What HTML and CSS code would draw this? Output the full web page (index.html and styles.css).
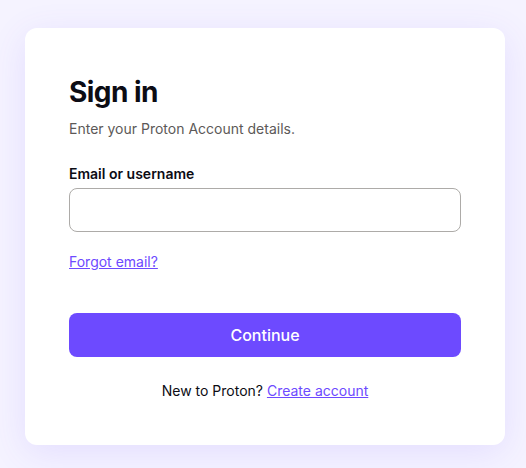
FILE: index.html
```html
<!DOCTYPE html>
<html lang="en">
<head>
<meta charset="utf-8">
<title>Sign in</title>
<link rel="stylesheet" href="styles.css">
</head>
<body>
<main class="page">
  <section class="card">
    <h1 class="title">Sign in</h1>
    <p class="subtitle">Enter your Proton Account details.</p>
    <form class="form">
      <label class="label" for="email">Email or username</label>
      <input class="input" id="email" type="text">
      <a class="link forgot" href="#">Forgot email?</a>
      <button class="button" type="button">Continue</button>
    </form>
    <p class="footer">New to Proton? <a class="link" href="#">Create account</a></p>
  </section>
</main>
</body>
</html>
```
FILE: styles.css
```css
* { box-sizing: border-box; }
html, body {
  margin: 0;
  padding: 0;
  background: #f5f3ff;
  font-family: Inter, "Noto Sans", sans-serif;
  color: #0c0c14;
}
.page {
  min-height: 468px;
  padding: 28px 0 0 25px;
}
.card {
  width: 480px;
  background: #ffffff;
  border-radius: 12px;
  padding: 47px 44px 44px;
  box-shadow: 0 8px 36px rgba(109, 74, 255, 0.12);
  display: flex;
  flex-direction: column;
}
.title {
  margin: 0;
  font-size: 28px;
  line-height: 34px;
  font-weight: 700;
  letter-spacing: -0.02em;
  color: #0c0c14;
}
.subtitle {
  margin: 10px 0 0;
  font-size: 14px;
  line-height: 20px;
  color: #5c5958;
}
.form {
  margin-top: 25px;
  display: flex;
  flex-direction: column;
}
.label {
  font-size: 14px;
  line-height: 20px;
  font-weight: 600;
  color: #0c0c14;
}
.input {
  margin-top: 4px;
  height: 44px;
  border: 1px solid #adaba8;
  border-radius: 8px;
  background: #fff;
  font: inherit;
  padding: 0 12px;
}
.link {
  color: #6d4aff;
  text-decoration: underline;
  font-size: 14px;
  line-height: 20px;
}
.forgot {
  margin-top: 20px;
  align-self: flex-start;
}
.button {
  margin-top: 41px;
  height: 44px;
  border: none;
  border-radius: 8px;
  background: #6d4aff;
  color: #ffffff;
  font-family: inherit;
  font-size: 16px;
  font-weight: 500;
}
.footer {
  margin: 24px 0 0;
  text-align: center;
  font-size: 14px;
  line-height: 20px;
  color: #0c0c14;
}
```
